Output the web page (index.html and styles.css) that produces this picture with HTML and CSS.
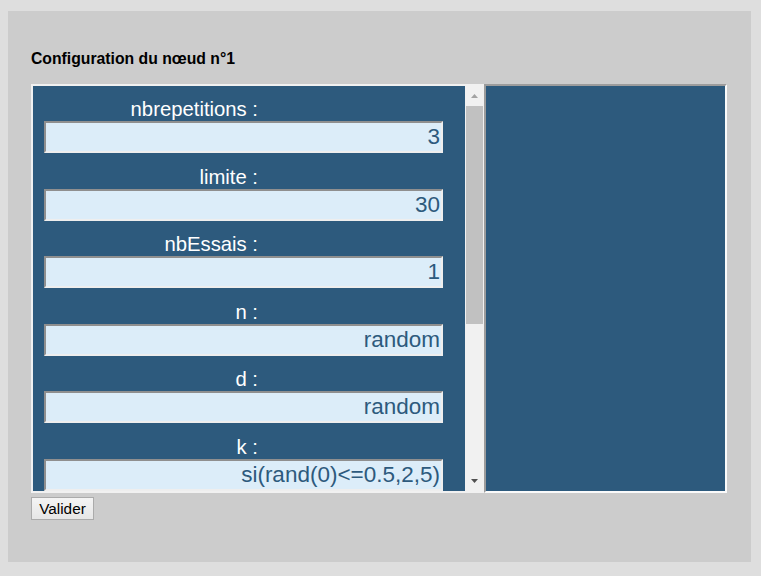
FILE: index.html
```html
<!DOCTYPE html>
<html lang="fr">
<head>
<meta charset="utf-8">
<title>Configuration du nœud n°1</title>
<link rel="stylesheet" href="styles.css">
</head>
<body>
<div class="panel">
  <h1 class="title">Configuration du nœud n°1</h1>
  <div class="boxes">
    <div class="params">
      <div class="params-content">
        <div class="field">
          <label class="field-label">nbrepetitions :</label>
          <input class="field-input" type="text" value="3">
        </div>
        <div class="field">
          <label class="field-label">limite :</label>
          <input class="field-input" type="text" value="30">
        </div>
        <div class="field">
          <label class="field-label">nbEssais :</label>
          <input class="field-input" type="text" value="1">
        </div>
        <div class="field">
          <label class="field-label">n :</label>
          <input class="field-input" type="text" value="random">
        </div>
        <div class="field">
          <label class="field-label">d :</label>
          <input class="field-input" type="text" value="random">
        </div>
        <div class="field">
          <label class="field-label">k :</label>
          <input class="field-input" type="text" value="si(rand(0)&lt;=0.5,2,5)">
        </div>
      </div>
      <div class="scrollbar">
        <div class="sb-button">
          <svg width="7" height="4" viewBox="0 0 7 4"><path d="M0 4 L3.5 0 L7 4 Z" fill="#a3a3a3"/></svg>
        </div>
        <div class="sb-track">
          <div class="sb-thumb"></div>
        </div>
        <div class="sb-button sb-button-down">
          <svg width="7" height="4" viewBox="0 0 7 4"><path d="M0 0 L7 0 L3.5 4 Z" fill="#505050"/></svg>
        </div>
      </div>
    </div>
    <div class="preview"></div>
  </div>
  <button class="validate" type="button">Valider</button>
</div>
</body>
</html>
```

FILE: styles.css
```css
html, body {
  margin: 0;
  padding: 0;
  background: #dedede;
}

body {
  padding: 11px 0 0 8px;
  font-family: "Liberation Sans", Arial, sans-serif;
}

.panel {
  box-sizing: border-box;
  width: 743px;
  height: 551px;
  background: #cccccc;
  padding: 39px 0 0 23px;
}

.title {
  margin: 0;
  font-size: 15.75px;
  font-weight: bold;
  line-height: 18px;
  color: #000;
}

.boxes {
  display: flex;
  margin-top: 16px;
  height: 409px;
}

.params {
  display: flex;
  width: 453px;
  background: #f1f1f1;
}

.params-content {
  box-sizing: border-box;
  width: 432px;
  margin: 2px 0 2px 2px;
  background: #2d5a7d;
  overflow: hidden;
  padding: 12px 0 0 11px;
}

.field + .field {
  margin-top: 12.5px;
}

.field-label {
  display: block;
  width: 214px;
  text-align: right;
  color: #ffffff;
  font-size: 20.3px;
  line-height: 23px;
}

.field-input {
  display: block;
  box-sizing: border-box;
  width: 399px;
  height: 32px;
  margin: 0;
  padding: 0 1px 0 2px;
  border: 2px solid;
  border-color: #8f8f8f #eeeeee #eeeeee #8f8f8f;
  background: #dcedf9;
  color: #2d5a7d;
  font-family: "Liberation Sans", Arial, sans-serif;
  font-size: 22.5px;
  text-align: right;
  outline: none;
}

.scrollbar {
  display: flex;
  flex-direction: column;
  width: 19px;
  background: #f1f1f1;
}

.sb-button {
  height: 20px;
  display: flex;
  align-items: center;
  justify-content: center;
  padding-top: 4px;
  box-sizing: border-box;
}

.sb-button svg {
  display: block;
}

.sb-button-down {
  height: 19px;
  padding-top: 0;
  align-items: flex-end;
  padding-bottom: 10px;
}

.sb-track {
  flex: 1;
  padding: 2px 1px 0 1px;
}

.sb-thumb {
  height: 218px;
  background: #c1c1c1;
}

.preview {
  box-sizing: border-box;
  width: 243px;
  height: 409px;
  border: 2px solid;
  border-color: #9c9c9c #fafafa #fafafa #9c9c9c;
  background: #2d5a7d;
}

.validate {
  display: block;
  box-sizing: border-box;
  margin-top: 4px;
  width: 63px;
  height: 23px;
  padding: 0;
  border: 1px solid #ababab;
  border-radius: 0;
  background: linear-gradient(#f4f4f4, #e6e6e6);
  color: #000;
  font-family: "Liberation Sans", Arial, sans-serif;
  font-size: 15.3px;
  line-height: 19px;
}
```
